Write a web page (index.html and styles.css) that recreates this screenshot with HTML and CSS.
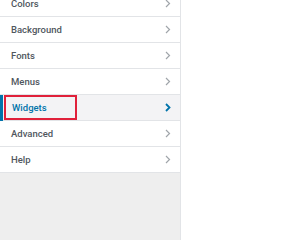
FILE: index.html
```html
<!DOCTYPE html>
<html>
    <head>
        <title>Customizer</title>
        <meta charset="UTF-8">
        <link rel="stylesheet" href="styles.css">
    </head>
    <body>
        <div class="layout">
            <div class="sidebar">
                <ul class="sections">
                    <li class="section"><span>Colors</span><svg class="arrow" viewBox="0 0 6 9"><polyline points="1,1 4.5,4.5 1,8"/></svg></li>
                    <li class="section"><span>Background</span><svg class="arrow" viewBox="0 0 6 9"><polyline points="1,1 4.5,4.5 1,8"/></svg></li>
                    <li class="section"><span>Fonts</span><svg class="arrow" viewBox="0 0 6 9"><polyline points="1,1 4.5,4.5 1,8"/></svg></li>
                    <li class="section"><span>Menus</span><svg class="arrow" viewBox="0 0 6 9"><polyline points="1,1 4.5,4.5 1,8"/></svg></li>
                    <li class="section active"><span class="mark">Widgets</span><svg class="arrow" viewBox="0 0 6 9"><polyline points="1,1 4.5,4.5 1,8"/></svg></li>
                    <li class="section"><span>Advanced</span><svg class="arrow" viewBox="0 0 6 9"><polyline points="1,1 4.5,4.5 1,8"/></svg></li>
                    <li class="section"><span>Help</span><svg class="arrow" viewBox="0 0 6 9"><polyline points="1,1 4.5,4.5 1,8"/></svg></li>
                </ul>
            </div>
            <div class="preview"></div>
        </div>
    </body>
</html>
```

FILE: styles.css
```css
/* Общие стили */
body {
    margin: 0;
    font-family: Roboto, "Liberation Sans", sans-serif;
    background-color: #ffffff;
}
.layout {
    display: flex;
    height: 240px;
    overflow: hidden;
}

/* Боковая панель */
.sidebar {
    width: 180px;
    border-right: 1px solid #e2e4e7;
    background-color: #eeeeee;
}
ul.sections {
    margin: -9px 0 0;
    padding: 0;
    list-style: none;
}
li.section {
    display: flex;
    align-items: center;
    justify-content: space-between;
    height: 25px;
    padding: 0 9px 0 11px;
    border-bottom: 1px solid #e2e4e7;
    background-color: #ffffff;
    font-size: 9.5px;
    font-weight: 500;
    color: #50575e;
}
li.section .arrow {
    width: 6px;
    height: 9px;
    fill: none;
    stroke: #a0a5aa;
    stroke-width: 1.2;
}

/* Активный пункт */
li.section.active {
    position: relative;
    background-color: #f3f3f5;
    color: #0073aa;
}
li.section.active::before {
    content: "";
    position: absolute;
    left: 0;
    top: 0;
    bottom: -1px;
    width: 3px;
    background-color: #0073aa;
}
li.section.active .arrow {
    stroke: #0073aa;
    stroke-width: 1.8;
}
.mark {
    margin-left: -7px;
    padding: 5px 28px 5px 6px;
    border: 2px solid #e0203a;
}

/* Превью */
.preview {
    flex: 1;
    background-color: #ffffff;
}
```
